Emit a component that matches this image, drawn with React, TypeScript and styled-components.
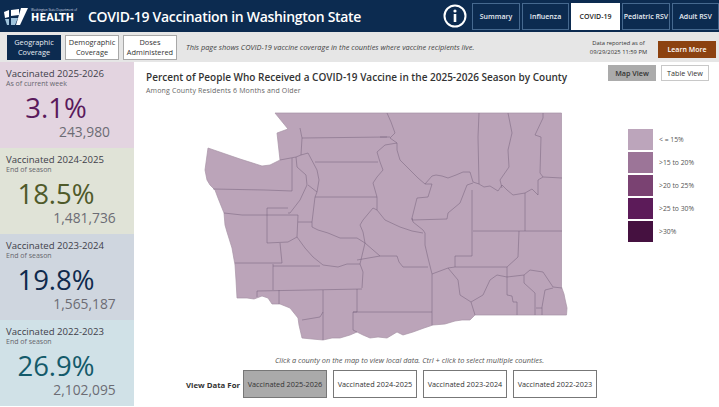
import React from "react";
import styled, { createGlobalStyle } from "styled-components";

const Global = createGlobalStyle`
  html, body { margin: 0; padding: 0; background: #fff; }
  body { font-family: "Open Sans", "Noto Sans", "Liberation Sans", sans-serif; }
  * { box-sizing: border-box; }
`;

const Page = styled.div`
  width: 719px;
  height: 407px;
  overflow: hidden;
  display: flex;
  flex-direction: column;
`;

const Header = styled.header`
  height: 32px;
  background: #0c2b50;
  display: flex;
  align-items: center;
  padding-left: 4px;
  color: #fff;
`;

const LogoWrap = styled.div`
  display: flex;
  align-items: center;
  gap: 3px;
  width: 84px;
`;

const LogoText = styled.div`
  display: flex;
  flex-direction: column;
  line-height: 1;
`;

const LogoSmall = styled.span`
  font-size: 3px;
  color: #d6dde6;
  margin-bottom: 1px;
  white-space: nowrap;
`;

const LogoBig = styled.span`
  font-family: "DejaVu Sans", sans-serif;
  font-size: 9.8px;
  font-weight: 700;
  letter-spacing: 0.2px;
`;

const AppTitle = styled.h1`
  margin: 0;
  font-size: 14px;
  letter-spacing: -0.3px;
  font-weight: 600;
  white-space: nowrap;
  width: 355px;
`;

const InfoButton = styled.div`
  width: 24px;
  height: 24px;
  margin-right: 5px;
`;

const Tabs = styled.nav`
  display: flex;
  align-items: center;
  gap: 2px;
  height: 32px;
`;

const Tab = styled.div<{ $active?: boolean; $w: number }>`
  width: ${(p) => p.$w}px;
  height: 27px;
  display: flex;
  align-items: center;
  justify-content: center;
  font-size: 7px;
  font-weight: 600;
  white-space: nowrap;
  border: 1px solid ${(p) => (p.$active ? "#fff" : "#46698f")};
  background: ${(p) => (p.$active ? "#fff" : "transparent")};
  color: ${(p) => (p.$active ? "#222" : "#e8edf3")};
`;

const SubBar = styled.div`
  height: 30px;
  background: #e6e6e6;
  display: flex;
  align-items: center;
  padding-left: 7px;
`;

const PageButtons = styled.div`
  display: flex;
  gap: 4px;
  width: 179px;
`;

const PageButton = styled.div<{ $active?: boolean }>`
  width: 54px;
  height: 25px;
  display: flex;
  align-items: center;
  justify-content: center;
  text-align: center;
  font-size: 7.4px;
  line-height: 10px;
  color: ${(p) => (p.$active ? "#e8edf3" : "#333")};
  background: ${(p) => (p.$active ? "#0c2b50" : "#fff")};
  border: 1px solid ${(p) => (p.$active ? "#0c2b50" : "#a8a8a8")};
`;

const PageNote = styled.div`
  font-size: 7.4px;
  font-style: italic;
  color: #444;
  width: 394px;
  white-space: nowrap;
`;

const Reported = styled.div`
  width: 77px;
  text-align: center;
  font-size: 5.8px;
  line-height: 9px;
  color: #333;
  margin-top: 1px;
`;

const LearnMore = styled.div`
  width: 58px;
  height: 17px;
  margin-left: 1px;
  margin-top: 4px;
  background: #8c4210;
  color: #fff;
  font-size: 7px;
  font-weight: 600;
  display: flex;
  align-items: center;
  justify-content: center;
`;

const Body = styled.div`
  flex: 1;
  display: flex;
  min-height: 0;
`;

const Side = styled.aside`
  width: 134px;
  display: flex;
  flex-direction: column;
`;

const Stat = styled.section<{ $bg: string }>`
  height: 86px;
  background: ${(p) => p.$bg};
  padding: 5px 0 0 6px;
  display: flex;
  flex-direction: column;
`;

const StatTitle = styled.div`
  font-size: 9.6px;
  line-height: 13px;
  color: #3f3f4a;
  white-space: nowrap;
`;

const StatSub = styled.div`
  font-size: 7px;
  line-height: 8px;
  color: #66666e;
`;

const Percent = styled.div<{ $color: string }>`
  width: 100px;
  text-align: center;
  font-size: 27.5px;
  font-weight: 500;
  line-height: 28px;
  margin-top: 6px;
  color: ${(p) => p.$color};
  white-space: nowrap;
`;

const Count = styled.div`
  width: 120px;
  padding-left: 37px;
  text-align: center;
  font-size: 13.8px;
  line-height: 19px;
  color: #6c6c74;
  white-space: nowrap;
`;

const Main = styled.main`
  flex: 1;
  display: flex;
  flex-direction: column;
`;

const TopRow = styled.div`
  height: 46px;
  padding: 3px 10px 0 12px;
  display: flex;
  justify-content: space-between;
`;

const Titles = styled.div`
  padding-top: 5px;
`;

const MapTitle = styled.h2`
  margin: 0;
  font-size: 10px;
  line-height: 15px;
  font-weight: 600;
  color: #333;
  white-space: nowrap;
`;

const MapSub = styled.div`
  font-size: 7px;
  line-height: 12px;
  letter-spacing: 0.15px;
  color: #666;
  white-space: nowrap;
`;

const ViewButtons = styled.div`
  display: flex;
  gap: 5px;
`;

const ViewButton = styled.div<{ $active?: boolean }>`
  width: 48px;
  height: 16px;
  display: flex;
  align-items: center;
  justify-content: center;
  font-size: 7.2px;
  font-weight: ${(p) => (p.$active ? 600 : 400)};
  color: #333;
  background: ${(p) => (p.$active ? "#ababab" : "#fff")};
  border: 1px solid ${(p) => (p.$active ? "#ababab" : "#c8c8c8")};
`;

const MapRow = styled.div`
  height: 236px;
  display: flex;
`;

const MapSvg = styled.svg`
  width: 372px;
  height: 236px;
  margin-left: 66px;
  flex: none;
`;

const Legend = styled.div`
  margin: 21px 0 0 56px;
  display: flex;
  flex-direction: column;
  gap: 2px;
`;

const LegendRow = styled.div`
  display: flex;
  align-items: center;
  gap: 6px;
  height: 21px;
`;

const Swatch = styled.div<{ $c: string }>`
  width: 25px;
  height: 21px;
  background: ${(p) => p.$c};
`;

const LegendLabel = styled.span`
  font-size: 6.8px;
  color: #555;
  white-space: nowrap;
`;

const Hint = styled.div`
  margin-top: 10px;
  height: 12px;
  line-height: 12px;
  padding-left: 141px;
  font-size: 7.4px;
  font-style: italic;
  color: #555;
  white-space: nowrap;
`;

const Footer = styled.div`
  margin-top: 4px;
  display: flex;
  align-items: center;
  padding-left: 52px;
`;

const FooterLabel = styled.div`
  font-size: 7.8px;
  font-weight: 700;
  color: #333;
  width: 57px;
  white-space: nowrap;
  padding-top: 2px;
`;

const SeasonButtons = styled.div`
  display: flex;
  gap: 6px;
`;

const SeasonButton = styled.div<{ $active?: boolean }>`
  width: 84px;
  height: 28px;
  display: flex;
  align-items: center;
  justify-content: center;
  font-size: 7.3px;
  white-space: nowrap;
  color: #333;
  background: ${(p) => (p.$active ? "#aaaaaa" : "#fff")};
  border: 1px solid #777;
`;

const outline =
  "M275,113 L561.5,113 L561.5,287 L564,294 L565,299 L567,308 L566.5,315 L475,315 L470,320 L462,320 L455,321 L445,324 L433,325 L424,328 L413,332 L403,335 L397,332 L392,335 L387,338 L378,337 L370,338 L363,335 L357,332 L350,335 L340,338 L332,338 L323,340 L312,339 L302,338 L299,325 L298,318 L290,308 L280,304 L272,304 L268,298 L262,296 L254,299 L247,298 L237,298 L236,280 L235,265 L232,248 L227,232 L225,225 L224,213 L218,198 L215,190 L210,185 L207,180 L205,170 L208,148 L240,159 L262,166 L270,165 L280,160 L277,133 L288,129 Z";

const borders = [
  "M300,128 L302,138 L301,155 L296,157 L280,160",
  "M302,138 L387,137",
  "M315,162 L378,162",
  "M292,158 L292,191 L265,190 L213,189",
  "M296,157 L297,167 L306,175 L307,185 L300,200 L290,213 L288,213",
  "M301,155 L308,153 L317,170 L319,180 L317,192 L308,185",
  "M315,197 L377,197",
  "M317,192 L315,197 L312,222 L312,227 L318,230 L328,233 L340,238 L357,238 L365,243",
  "M224,213 L242,215 L267,215 L298,215 L297,237 L288,242 L267,243 L267,208 L288,208",
  "M298,222 L312,222",
  "M387,113 L391,122 L395,133 L390,138 L397,143 L397,150 L400,160 L410,170 L418,178 L425,184 L432,184",
  "M380,137 L390,137",
  "M385,145 L397,143",
  "M385,145 L377,152 L380,162 L383,170 L377,177 L373,183 L377,197 L377,210 L373,208 L363,220 L360,225 L363,232 L365,243 L380,256",
  "M377,210 L385,220 L400,227 L412,231 L423,233",
  "M412,218 L413,222 L423,230 L425,233 L425,245 L428,258 L432,274",
  "M479,113 L478,137 L479,184",
  "M508,113 L512,133 L508,150 L509,167 L500,180 L502,188",
  "M543,113 L543,118 L535,135 L541,137 L540,173 L543,177 L562,178",
  "M543,177 L538,180 L538,195",
  "M425,184 L432,176 L436,175 L442,176 L448,178 L456,175 L463,172 L470,172 L473,182 L479,184 L484,187 L490,186 L498,191 L502,185 L507,190 L513,195 L525,193 L532,189 L538,195",
  "M432,184 L428,197 L417,198 L412,218 L412,220 L447,219 L448,213 L460,203 L467,185 L473,183",
  "M525,193 L525,231",
  "M472,190 L472,256 L455,256 L455,267 L448,268 L432,274",
  "M473,231 L562,231",
  "M519,231 L518,257 L507,267 L455,267",
  "M448,268 L458,280 L460,295 L471,302 L475,315",
  "M471,302 L483,295 L490,280 L497,275 L507,277 L524,275 L530,270 L543,272 L553,287 L562,288",
  "M507,267 L507,295 L512,296 L513,302 L517,302 L517,315",
  "M524,275 L524,283 L535,293 L535,315",
  "M553,288 L545,290 L542,307 L542,315",
  "M536,308 L542,308",
  "M432,274 L432,325",
  "M353,312 L432,312",
  "M380,256 L397,256 L399,262 L403,267 L428,267",
  "M297,237 L305,248 L313,257 L323,265 L338,267 L347,264 L360,264 L365,243",
  "M360,264 L363,272 L362,288",
  "M357,260 L380,256",
  "M280,243 L282,263 L235,263",
  "M273,264 L273,290",
  "M273,266 L320,266",
  "M257,291 L257,297",
  "M257,291 L362,289",
  "M279,290 L279,304",
  "M323,290 L323,340",
  "M357,289 L357,312 L353,312 L353,330 L357,332",
  "M323,312 L320,317 L302,320",
];

const stats = [
  { bg: "#e3d4e0", color: "#5a1a5c", title: "Vaccinated 2025-2026", sub: "As of current week", pct: "3.1%", n: "243,980" },
  { bg: "#e0e3d7", color: "#4f5a2a", title: "Vaccinated 2024-2025", sub: "End of season", pct: "18.5%", n: "1,481,736" },
  { bg: "#cfd6df", color: "#0f2a4d", title: "Vaccinated 2023-2024", sub: "End of season", pct: "19.8%", n: "1,565,187" },
  { bg: "#d0e1e7", color: "#145a6a", title: "Vaccinated 2022-2023", sub: "End of season", pct: "26.9%", n: "2,102,095" },
];

const legend = [
  ["#bca5bb", "< = 15%"],
  ["#9c7598", ">15 to 20%"],
  ["#7a4272", ">20 to 25%"],
  ["#5c1b59", ">25 to 30%"],
  ["#451140", ">30%"],
];

export default function App() {
  return (
    <Page>
      <Global />
      <Header>
        <LogoWrap>
          <svg width="24" height="17" viewBox="0 0 24 17">
            <path d="M0,4 L5,2 L5,9 L1,10 Z" fill="#fff" />
            <path d="M1,11 L5,11 L5,17 L3,17 Z" fill="#9fc3dc" />
            <path d="M7,2 L15,1 L15,7 L7,8 Z" fill="#fff" />
            <path d="M7,10 L14,10 L11,17 L7,17 Z" fill="#9fc3dc" />
            <path d="M17,0 L24,0 L16,17 L12,17 Z" fill="#fff" />
          </svg>
          <LogoText>
            <LogoSmall>Washington State Department of</LogoSmall>
            <LogoBig>HEALTH</LogoBig>
          </LogoText>
        </LogoWrap>
        <AppTitle>COVID-19 Vaccination in Washington State</AppTitle>
        <InfoButton>
          <svg width="24" height="24" viewBox="0 0 24 24">
            <circle cx="12" cy="12" r="10.5" fill="none" stroke="#fff" strokeWidth="2" />
            <rect x="10.7" y="10" width="2.6" height="8" fill="#fff" />
            <circle cx="12" cy="7" r="1.6" fill="#fff" />
          </svg>
        </InfoButton>
        <Tabs>
          <Tab $w={48}>Summary</Tab>
          <Tab $w={47}>Influenza</Tab>
          <Tab $w={49} $active>COVID-19</Tab>
          <Tab $w={48}>Pediatric RSV</Tab>
          <Tab $w={47}>Adult RSV</Tab>
        </Tabs>
      </Header>
      <SubBar>
        <PageButtons>
          <PageButton $active>Geographic<br />Coverage</PageButton>
          <PageButton>Demographic<br />Coverage</PageButton>
          <PageButton>Doses<br />Administered</PageButton>
        </PageButtons>
        <PageNote>This page shows COVID-19 vaccine coverage in the counties where vaccine recipients live.</PageNote>
        <Reported>Data reported as of<br />09/29/2025 11:59 PM</Reported>
        <LearnMore>Learn More</LearnMore>
      </SubBar>
      <Body>
        <Side>
          {stats.map((s) => (
            <Stat key={s.title} $bg={s.bg}>
              <StatTitle>{s.title}</StatTitle>
              <StatSub>{s.sub}</StatSub>
              <Percent $color={s.color}>{s.pct}</Percent>
              <Count>{s.n}</Count>
            </Stat>
          ))}
        </Side>
        <Main>
          <TopRow>
            <Titles>
              <MapTitle>Percent of People Who Received a COVID-19 Vaccine in the 2025-2026 Season by County</MapTitle>
              <MapSub>Among County Residents 6 Months and Older</MapSub>
            </Titles>
            <ViewButtons>
              <ViewButton $active>Map View</ViewButton>
              <ViewButton>Table View</ViewButton>
            </ViewButtons>
          </TopRow>
          <MapRow>
            <MapSvg viewBox="200 108 372 236">
              <path d={outline} fill="#bba4b9" stroke="#a893a6" strokeWidth="0.7" />
              {borders.map((d) => (
                <path key={d} d={d} fill="none" stroke="#75607a" strokeOpacity="0.85" strokeWidth="0.6" strokeLinejoin="round" />
              ))}
            </MapSvg>
            <Legend>
              {legend.map(([c, l]) => (
                <LegendRow key={l}>
                  <Swatch $c={c} />
                  <LegendLabel>{l}</LegendLabel>
                </LegendRow>
              ))}
            </Legend>
          </MapRow>
          <Hint>Click a county on the map to view local data. Ctrl + click to select multiple counties.</Hint>
          <Footer>
            <FooterLabel>View Data For</FooterLabel>
            <SeasonButtons>
              <SeasonButton $active>Vaccinated 2025-2026</SeasonButton>
              <SeasonButton>Vaccinated 2024-2025</SeasonButton>
              <SeasonButton>Vaccinated 2023-2024</SeasonButton>
              <SeasonButton>Vaccinated 2022-2023</SeasonButton>
            </SeasonButtons>
          </Footer>
        </Main>
      </Body>
    </Page>
  );
}
